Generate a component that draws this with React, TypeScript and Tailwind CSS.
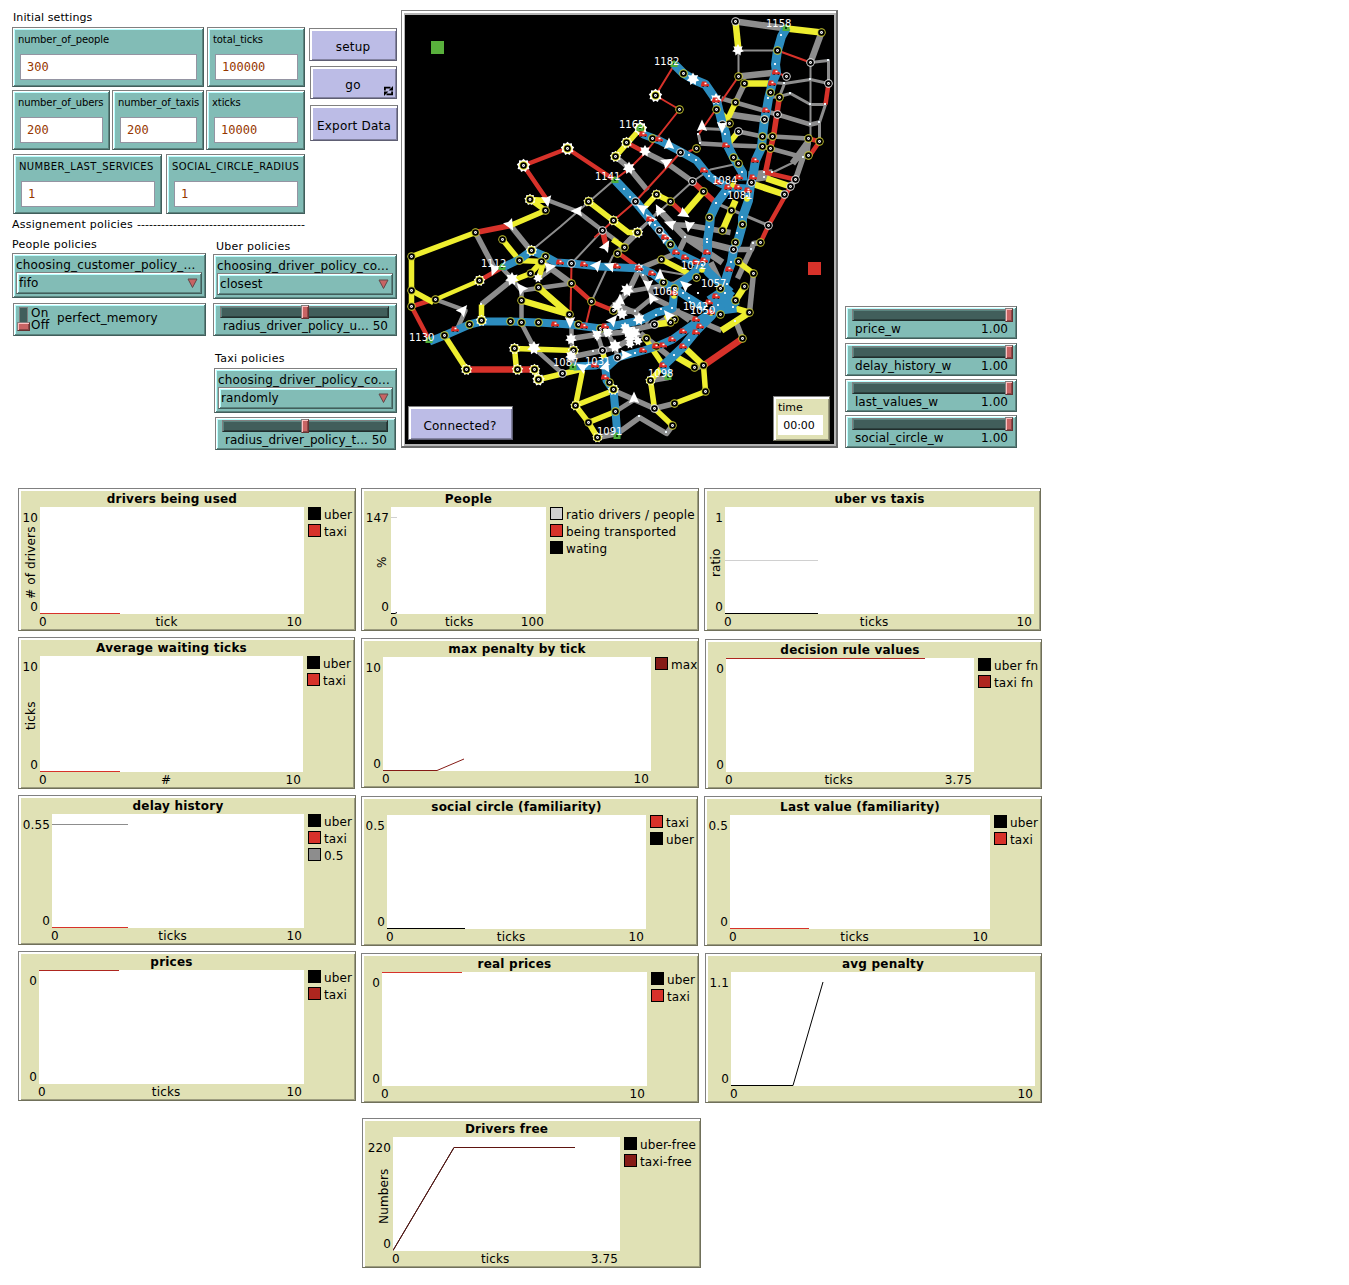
import React from "react";

type Pt = [number, number];
type Edge = [string, number, number[]];

const BLUE = "#2d8dbf";
const YEL = "#eeee2f";
const RED = "#d7322a";
const GRAY = "#8d8d8d";

const EDGES: Edge[] = [
  // thin roads
  [GRAY, 2, [613, 180, 560, 226, 531, 250]],
  [GRAY, 2, [738, 50, 777, 50]],
  [GRAY, 2, [738, 50, 738, 76]],
  [GRAY, 2, [810, 62, 810, 137, 808, 155]],
  [GRAY, 2, [692, 181, 670, 201, 628, 238, 612, 256, 591, 301]],
  [GRAY, 2, [692, 181, 710, 169, 738, 163]],
  [GRAY, 2, [571, 263, 602, 230]],
  [GRAY, 2, [659, 270, 700, 277]],
  [GRAY, 2, [753, 172, 772, 172, 803, 157]],
  [GRAY, 3, [810, 62, 828, 60, 828, 83]],
  [GRAY, 3, [825, 104, 819, 122, 819, 141]],
  [GRAY, 3, [772, 82, 784, 83, 810, 79, 828, 83]],
  [GRAY, 3, [770, 97, 779, 96, 790, 93, 810, 104, 825, 104]],
  [GRAY, 3, [784, 83, 779, 96]],
  [GRAY, 4, [721, 98, 735, 102, 777, 114, 810, 124, 819, 122]],
  [GRAY, 3, [702, 128, 723, 129]],
  [GRAY, 4, [738, 131, 762, 136, 772, 136, 808, 138]],
  [GRAY, 4, [700, 143, 735, 145, 762, 146, 770, 148, 803, 157]],
  [GRAY, 3, [698, 134, 700, 143]],
  [GRAY, 6, [729, 114, 764, 119]],
  [GRAY, 5, [744, 83, 735, 102]],
  [GRAY, 6, [735, 21, 786, 28]],
  [GRAY, 6, [821, 32, 810, 62]],
  [GRAY, 6, [738, 76, 776, 72]],
  [GRAY, 6, [792, 163, 808, 141]],
  [GRAY, 5, [808, 141, 795, 179, 790, 186]],
  [GRAY, 6, [748, 174, 772, 172]],
  [GRAY, 6, [755, 178, 770, 176]],
  [GRAY, 3, [716, 203, 768, 225]],
  [GRAY, 4, [548, 200, 577, 211, 602, 230, 617, 241]],
  [GRAY, 5, [475, 232, 495, 270]],
  [GRAY, 4, [500, 266, 512, 279, 521, 290, 521, 323, 534, 348, 562, 373]],
  [GRAY, 5, [510, 225, 531, 251]],
  [GRAY, 5, [481, 304, 512, 279]],
  [GRAY, 4, [435, 299, 465, 310, 456, 330]],
  [GRAY, 6, [541, 261, 571, 283]],
  [GRAY, 4, [521, 290, 571, 283]],
  [GRAY, 4, [538, 278, 552, 268]],
  [GRAY, 5, [615, 156, 629, 168, 647, 190]],
  [GRAY, 5, [645, 152, 667, 163, 692, 181]],
  [GRAY, 5, [637, 232, 617, 252]],
  [GRAY, 3, [637, 232, 659, 210]],
  [GRAY, 6, [659, 210, 685, 237, 733, 249]],
  [GRAY, 6, [685, 237, 722, 262]],
  [GRAY, 5, [669, 224, 689, 225, 730, 232]],
  [GRAY, 5, [685, 237, 678, 252, 661, 259, 639, 268]],
  [GRAY, 5, [733, 249, 751, 249, 753, 243, 760, 242]],
  [GRAY, 5, [750, 250, 737, 278]],
  [GRAY, 6, [710, 262, 728, 300]],
  [GRAY, 5, [639, 268, 628, 291, 609, 310]],
  [GRAY, 4, [628, 291, 674, 283, 696, 270]],
  [GRAY, 5, [639, 268, 648, 285, 652, 297]],
  [GRAY, 4, [652, 297, 635, 311]],
  [GRAY, 5, [609, 310, 635, 311]],
  [GRAY, 5, [652, 297, 668, 305, 689, 320]],
  [GRAY, 5, [618, 305, 634, 312, 648, 322]],
  [GRAY, 5, [571, 338, 597, 334, 620, 332, 656, 324, 680, 310]],
  [GRAY, 5, [573, 356, 602, 350, 615, 347, 640, 333]],
  [GRAY, 4, [571, 324, 571, 338, 573, 366]],
  [GRAY, 4, [597, 334, 602, 350]],
  [GRAY, 4, [606, 330, 615, 347, 617, 357]],
  [GRAY, 5, [640, 333, 664, 352, 674, 360]],
  [GRAY, 5, [674, 310, 721, 330]],
  [GRAY, 5, [753, 273, 749, 312]],
  [GRAY, 5, [735, 320, 742, 338]],
  [GRAY, 5, [674, 403, 654, 408, 613, 390]],
  [GRAY, 5, [672, 425, 666, 433, 639, 417, 617, 433, 597, 437]],
  [GRAY, 4, [615, 411, 634, 399]],
  [GRAY, 5, [650, 380, 668, 377]],
  [GRAY, 5, [696, 367, 703, 365]],
  // red roads
  [RED, 2, [777, 50, 810, 62]],
  [RED, 2, [776, 72, 786, 76]],
  [RED, 2, [738, 76, 698, 134]],
  [RED, 2, [674, 64, 655, 95, 679, 109, 645, 152, 629, 168, 613, 180]],
  [RED, 2, [680, 152, 635, 201, 613, 220, 594, 237]],
  [RED, 2, [571, 263, 570, 314]],
  [RED, 2, [591, 301, 585, 326]],
  [RED, 2, [696, 148, 688, 151]],
  [RED, 4, [828, 83, 825, 104]],
  [RED, 4, [819, 141, 808, 157]],
  [RED, 5, [779, 96, 773, 136, 770, 148, 765, 172]],
  [RED, 4, [765, 172, 795, 179]],
  [RED, 4, [790, 186, 768, 225, 760, 242]],
  [RED, 4, [547, 200, 523, 165, 567, 148, 615, 180]],
  [RED, 4, [626, 142, 645, 152]],
  [RED, 5, [692, 181, 716, 203]],
  [RED, 5, [475, 232, 510, 225]],
  [RED, 4, [411, 306, 433, 299]],
  [RED, 4, [411, 306, 429, 340]],
  [RED, 4, [479, 280, 500, 268]],
  [RED, 6, [466, 369, 534, 369]],
  [RED, 4, [571, 283, 591, 301, 613, 310]],
  [RED, 5, [602, 230, 606, 247]],
  [RED, 4, [617, 252, 639, 268]],
  [RED, 4, [670, 201, 684, 214]],
  [RED, 6, [742, 338, 703, 365]],
  [RED, 6, [724, 295, 735, 300]],
  [RED, 4, [808, 138, 819, 141]],
  // yellow roads
  [YEL, 6, [786, 28, 821, 32]],
  [YEL, 6, [735, 21, 738, 50]],
  [YEL, 6, [744, 83, 772, 83]],
  [YEL, 5, [735, 102, 728, 117]],
  [YEL, 5, [738, 131, 729, 142]],
  [YEL, 5, [717, 109, 728, 120]],
  [YEL, 5, [640, 128, 615, 156]],
  [YEL, 6, [754, 184, 784, 194]],
  [YEL, 6, [766, 178, 790, 186]],
  [YEL, 6, [735, 200, 722, 230]],
  [YEL, 6, [703, 191, 684, 213]],
  [YEL, 5, [643, 208, 656, 194, 670, 201]],
  [YEL, 5, [588, 201, 628, 232, 637, 232]],
  [YEL, 5, [612, 239, 624, 247]],
  [YEL, 5, [475, 232, 411, 256, 411, 306]],
  [YEL, 5, [510, 225, 545, 210, 530, 199, 548, 200]],
  [YEL, 5, [411, 290, 433, 302]],
  [YEL, 4, [435, 299, 479, 280]],
  [YEL, 5, [481, 304, 481, 321]],
  [YEL, 5, [502, 239, 519, 260]],
  [YEL, 5, [519, 260, 541, 261, 530, 273, 512, 280]],
  [YEL, 5, [545, 256, 538, 278]],
  [YEL, 6, [538, 287, 569, 314, 521, 300]],
  [YEL, 5, [444, 335, 466, 369]],
  [YEL, 5, [534, 369, 538, 379, 580, 369]],
  [YEL, 5, [516, 369, 514, 348, 573, 350]],
  [YEL, 5, [582, 370, 575, 405, 588, 422, 597, 437]],
  [YEL, 5, [575, 405, 613, 390]],
  [YEL, 5, [588, 422, 615, 411]],
  [YEL, 5, [602, 350, 606, 368]],
  [YEL, 5, [661, 259, 696, 277]],
  [YEL, 5, [737, 261, 753, 273]],
  [YEL, 6, [744, 286, 735, 300]],
  [YEL, 6, [735, 308, 749, 312, 721, 330]],
  [YEL, 5, [703, 365, 705, 391, 674, 403]],
  [YEL, 5, [654, 408, 672, 425]],
  [YEL, 5, [663, 365, 650, 380, 654, 408]],
  [YEL, 5, [644, 337, 663, 365]],
  [YEL, 6, [684, 347, 703, 365]],
  [YEL, 6, [675, 356, 694, 367]],
  [YEL, 6, [654, 324, 670, 322, 666, 314]],
  // main lines
  [BLUE, 9, [786, 27, 781, 36, 777, 50, 775, 64, 776, 72, 772, 82, 768, 98, 766, 110, 764, 119, 762, 136, 761, 147, 755, 160, 753, 172, 750, 184, 748, 200, 742, 217, 742, 224, 737, 242, 733, 249, 731, 262, 728, 270, 722, 290]],
  [BLUE, 9, [674, 64, 683, 73, 693, 79, 705, 84, 716, 100, 722, 124, 725, 132, 727, 145, 733, 157, 742, 172, 742, 180]],
  [BLUE, 8, [640, 128, 643, 134, 659, 140, 680, 151, 696, 160, 704, 170, 709, 176, 718, 182, 728, 187, 748, 188]],
  [BLUE, 9, [728, 187, 716, 203, 710, 216, 709, 227, 707, 240, 707, 252, 703, 265, 708, 272, 730, 292]],
  [BLUE, 9, [615, 180, 635, 201, 650, 219, 659, 230, 670, 244, 675, 252, 700, 264]],
  [BLUE, 8, [502, 267, 519, 259, 531, 250, 545, 256, 556, 262, 571, 263, 600, 266, 640, 268, 652, 273, 663, 282, 674, 288, 689, 298, 705, 308]],
  [BLUE, 8, [429, 341, 444, 335, 469, 324, 481, 321, 510, 321, 538, 322, 570, 324, 600, 328, 640, 320, 656, 312, 672, 308, 674, 287, 690, 275, 702, 264]],
  [BLUE, 8, [573, 366, 595, 365, 617, 357, 643, 350, 656, 346, 672, 339, 683, 331, 700, 319, 712, 311, 736, 308]],
  [BLUE, 8, [617, 357, 605, 368, 606, 380, 613, 390, 615, 411, 617, 435]],
  [BLUE, 9, [668, 375, 663, 365, 683, 346, 696, 330, 711, 315, 731, 290]],
  [BLUE, 14, [710, 302, 722, 294, 734, 308]],
];

const YELLOW_NODES: Pt[] = [
  [821, 32], [738, 76], [777, 50], [744, 83], [770, 92], [779, 97], [735, 102], [729, 123], [764, 119], [762, 136], [772, 136], [762, 146], [770, 148], [808, 138], [819, 141], [808, 155],
  [683, 73], [716, 109], [679, 109], [696, 148], [652, 138], [733, 157], [738, 163], [703, 191], [731, 210], [722, 230], [709, 217], [742, 224], [735, 242], [760, 242], [670, 201], [670, 244],
  [545, 210], [475, 232], [411, 256], [411, 290], [411, 306], [435, 299], [444, 335], [469, 324], [502, 239], [519, 260], [545, 256], [541, 261], [530, 273], [538, 287], [521, 300], [510, 321], [521, 322], [538, 322], [571, 283], [591, 301], [569, 314], [578, 324], [600, 328], [613, 310], [617, 253], [624, 247], [661, 259], [663, 282], [674, 288], [696, 277], [738, 261], [753, 273], [744, 286], [735, 300], [749, 312], [742, 338], [720, 314], [720, 288], [703, 365], [705, 391], [694, 367], [674, 403], [672, 425], [646, 338], [656, 346], [615, 411], [609, 382], [588, 422], [573, 350], [674, 319], [670, 322],
];
const WHITE_NODES: Pt[] = [
  [735, 21], [810, 62], [828, 83], [786, 76], [777, 114], [764, 119], [722, 124], [738, 131], [680, 152], [692, 181], [795, 179], [790, 186], [784, 194], [768, 225], [751, 182], [733, 249], [635, 201], [659, 230], [602, 230], [571, 263], [562, 373], [602, 350], [617, 357], [654, 408], [654, 324],
];
const BURST_NODES: [number, number, number][] = [
  [655, 95, 6.5], [567, 148, 6.5], [523, 165, 6.5], [529.5, 199, 5.5], [588, 201, 5], [615, 156, 5.5], [626, 142, 5.5], [640, 128, 6.5], [656, 194, 5], [613, 220, 5], [637, 232, 5.5], [479, 280, 5.5], [531, 250, 5.5], [481, 320, 5.5], [466, 369, 5.5], [514, 348, 5.5], [517, 369, 5.5], [534, 369, 5.5], [538, 379, 6], [573, 350, 5.5], [575, 405, 5], [597, 437, 5], [650, 380, 5], [613, 389, 5.5],
];
const STARS: [number, number, number][] = [
  [738, 50, 6], [693, 79, 6.5], [716, 99, 6], [645, 151, 6], [629, 168, 6.5], [512, 279, 7], [534, 348, 7], [538, 278, 5], [571, 339, 6], [571, 356, 6], [627, 290, 7], [617, 306, 6], [622, 314, 6], [639, 319, 6.5], [615, 346, 7], [628, 331, 7], [634, 333, 7], [630, 338, 6], [638, 341, 5], [625, 327, 5], [597, 335, 5], [639, 268, 5], [608, 333, 5], [659, 211, 4], [630, 344, 5],
];
const ARROWS: [number, number, number][] = [
  [702, 126, 0], [722, 127, 180], [669, 144, 0], [667, 162, 60], [547, 201, 170], [577, 211, 270], [510, 225, 150], [494, 270, 200], [521, 288, 320], [463, 310, 40], [550, 267, 80], [597, 265, 40], [610, 266, 290], [659, 210, 330], [642, 208, 300], [670, 224, 290], [684, 214, 120], [689, 226, 190], [606, 246, 30], [648, 285, 180], [652, 298, 330], [685, 285, 310], [660, 275, 0], [570, 322, 180], [582, 367, 300], [597, 335, 180], [613, 320, 40], [606, 330, 320], [626, 355, 90], [634, 398, 0], [668, 315, 320], [620, 300, 0], [606, 366, 20], [650, 219, 320], [665, 237, 330],
];
const CARS: Pt[] = [
  [776, 72], [772, 83], [766, 110], [716, 100], [705, 84], [726, 145], [643, 134], [659, 139], [755, 160], [704, 170], [753, 177], [739, 177], [728, 187], [738, 187], [748, 190], [718, 182], [650, 219], [665, 237], [676, 252], [685, 257], [696, 262], [707, 252], [704, 260], [729, 269], [560, 262], [584, 264], [617, 266], [639, 268], [652, 273], [674, 293], [455, 329], [555, 324], [584, 326], [605, 326], [595, 365], [605, 377], [643, 350], [656, 346], [663, 345], [672, 339], [683, 331], [696, 332], [683, 346], [700, 326], [696, 319], [709, 302], [716, 296], [663, 365], [711, 312],
];
const DOTS: Pt[] = [
  [781, 35], [775, 64], [768, 98], [725, 134], [689, 155], [696, 160], [709, 176], [742, 172], [747, 196], [742, 217], [737, 233], [709, 227], [707, 239], [707, 242], [716, 203], [725, 194], [731, 262], [624, 189], [630, 197], [655, 225], [643, 275], [656, 315], [661, 309], [672, 308], [635, 353], [674, 355], [689, 340], [702, 265], [683, 293], [689, 298], [725, 293], [718, 305], [733, 307], [727, 284], [690, 302], [828, 60], [810, 79], [810, 104], [825, 104], [819, 122], [810, 124], [784, 83], [790, 93], [751, 249], [753, 243], [685, 237], [735, 321], [666, 432], [639, 416], [481, 304], [764, 172], [764, 177], [772, 172], [803, 157], [698, 134], [700, 143], [635, 311], [698, 293], [593, 351],
];
const TERMINALS: Pt[] = [
  [786, 28], [674, 64], [640, 128], [615, 180], [502, 267], [429, 340], [573, 367], [617, 436], [668, 377],
];
const LABELS: [number, number, string][] = [
  [766, 27, "1158"], [654, 65, "1182"], [619, 128, "1165"], [595, 180, "1141"], [712, 184, "1084"], [727, 199, "1081"], [481, 267, "1112"], [681, 269, "1072"], [653, 295, "1068"], [701, 287, "1057"], [683, 310, "1042"], [690, 314, "1050"], [409, 341, "1130"], [553, 366, "1087"], [585, 365, "1031"], [648, 377, "1098"], [597, 435, "1091"],
];

function starPoints(x: number, y: number, r: number, n: number, inner: number) {
  const out: string[] = [];
  for (let i = 0; i < n * 2; i++) {
    const a = (Math.PI * i) / n - Math.PI / 2;
    const q = i % 2 ? r * inner : r;
    out.push((x + q * Math.cos(a)).toFixed(1) + "," + (y + q * Math.sin(a)).toFixed(1));
  }
  return out.join(" ");
}

function Stop({ x, y, halo }: { x: number; y: number; halo: string }) {
  return (
    <g>
      <circle cx={x + 0.5} cy={y + 0.5} r={4.2} fill={halo} />
      <circle cx={x + 0.5} cy={y + 0.5} r={3.3} fill="#000" />
      <circle cx={x + 0.5} cy={y + 0.5} r={1.4} fill="#fff" />
      <circle cx={x + 0.5} cy={y + 0.5} r={0.5} fill="#555" />
    </g>
  );
}

function CityMap() {
  return (
    <svg className="block h-[429px] w-[429px] bg-black" viewBox="405 15 429 429">
      <rect x={431} y={41} width={13} height={13} fill="#59b03c" />
      <rect x={808} y={262} width={13} height={13} fill={RED} />
      <g transform="translate(0.5 0.5)">
        {EDGES.map(([c, w, p], i) => (
          <polyline key={i} points={p.join(" ")} fill="none" stroke={c} strokeWidth={w > 3 && w < 8 ? w + 0.5 : w} strokeLinejoin="round" />
        ))}
      </g>
      {[[747, 199], [702, 270], [674, 296], [721, 288], [711, 313], [733, 185]].map(([x, y]) => (
        <circle key={x} cx={x} cy={y} r={2.8} fill={YEL} />
      ))}
      {BURST_NODES.map(([x, y, r], i) => (
        <g key={i}>
          <polygon points={starPoints(x + 0.5, y + 0.5, r + 0.3, 9, 0.78)} fill="#fff" />
          <Stop x={x} y={y} halo={YEL} />
        </g>
      ))}
      {YELLOW_NODES.map(([x, y], i) => <Stop key={i} x={x} y={y} halo="#c9c92e" />)}
      {WHITE_NODES.map(([x, y], i) => <Stop key={i} x={x} y={y} halo="#e4e4e4" />)}
      {STARS.map(([x, y, r], i) => <polygon key={i} points={starPoints(x, y, r, 7, 0.6)} fill="#fff" />)}
      {ARROWS.map(([x, y, a], i) => (
        <path key={i} d="M0 -6.5 L5.2 5 L0 3.6 L-5.2 5 Z" fill="#fff" transform={`translate(${x} ${y}) rotate(${a})`} />
      ))}
      {DOTS.map(([x, y], i) => <rect key={i} x={x - 1} y={y - 1} width={2} height={2} fill="#e8f2f8" />)}
      {CARS.map(([x, y], i) => (
        <g key={i} transform={`translate(${x} ${y})`}>
          <path d="M-4 1 L-3 -2.4 H1 L2 -0.4 L4 0.6 V2.6 H-4 Z" fill="#dc2a22" />
          <rect x={-0.5} y={-1.3} width={2} height={1.6} fill="#fff" />
          <rect x={-2.6} y={2} width={1.4} height={1} fill="#222" />
          <rect x={1.6} y={2} width={1.4} height={1} fill="#222" />
        </g>
      ))}
      {TERMINALS.map(([x, y], i) => (
        <g key={i}>
          <path d={`M${x - 3.5} ${y + 3} V${y - 1} L${x} ${y - 4} L${x + 3.5} ${y - 1} V${y + 3} Z`} fill="#4fae3a" />
          <rect x={x - 1} y={y - 1} width={2} height={2} fill="#123d0c" />
        </g>
      ))}
      <g fill="#fff" fontFamily="DejaVu Sans" fontSize={10}>
        {LABELS.map(([x, y, t]) => <text key={t} x={x} y={y}>{t}</text>)}
      </g>
    </svg>
  );
}

const TEAL =
  "bg-[#82bcb6] border border-t-[#808080] border-l-[#808080] border-b-[#415e5b] border-r-[#415e5b] shadow-[inset_1px_1px_#fff,inset_-1px_-1px_#5b847f,inset_2px_2px_#b9ffff]";
const LILAC =
  "flex items-center justify-center bg-[#bcbce6] border border-t-[#808080] border-l-[#808080] border-b-[#5e5e73] border-r-[#5e5e73] shadow-[inset_2px_2px_#fff,inset_-1px_-1px_#8383a1] text-[12px] tracking-[0.2px]";
const TAN =
  "bg-[#e0e1b5] border border-t-[#808080] border-l-[#808080] border-b-[#70705a] border-r-[#70705a] shadow-[inset_2px_2px_#fff,inset_-1px_-1px_#9d9d7f]";
const THUMB =
  "bg-[#c86464] border border-t-[#808080] border-l-[#808080] border-b-[#643232] border-r-[#643232] shadow-[inset_1px_1px_#ffc0c0,inset_-1px_-1px_#8c4646]";

function Input({ label, value, size }: { label: string; value: string; size: string }) {
  return (
    <div className={`${TEAL} ${size} h-[60px] shrink-0 pl-[7px] pr-[6px]`}>
      <div className="-ml-[2px] h-[26px] whitespace-nowrap pt-[5px] text-[10px] leading-[14px]">{label}</div>
      <div className="flex h-[26px] items-center border border-[#9494a2] bg-white pl-[6px] font-['DejaVu_Sans_Mono',monospace] text-[12px] tracking-normal text-[#963700]">
        {value}
      </div>
    </div>
  );
}

function Chooser({ label, value, size }: { label: string; value: string; size: string }) {
  return (
    <div className={`${TEAL} ${size} h-[45px] px-[3px]`}>
      <div className="h-[18px] overflow-visible whitespace-nowrap pt-[3px] text-[12px] leading-[16px] tracking-[0.16px]">{label}</div>
      <div className={`${TEAL} flex h-[22px] items-center justify-between pl-[2px] pr-[3px] text-[12px] tracking-[0.1px]`}>
        <span className="-mt-[1px]">{value}</span>
        <svg className="h-[11px] w-[11px]" viewBox="0 0 11 11">
          <path d="M1 1 H10 L5.5 9.5 Z" fill="#c86464" stroke="#5f4a4a" />
        </svg>
      </div>
    </div>
  );
}

function Slider({ label, value, size, end }: { label: string; value: string; size: string; end?: boolean }) {
  return (
    <div className={`${TEAL} ${size} h-[33px] pt-[1px]`}>
      <div className={`flex h-[14px] items-center pl-[6px] ${end ? "pr-[3px]" : "pr-[7px]"}`}>
        <div className={`flex h-[12px] grow items-center border border-t-[#808080] border-l-[#808080] border-b-[#212e2d] border-r-[#212e2d] bg-[#415e5b] shadow-[inset_1px_1px_#5b847f,inset_-1px_-1px_#2d413f] ${end ? "justify-end" : "justify-center"}`}>
          <div className={`${THUMB} h-[14px] w-[8px] shrink-0 ${end ? "-mr-[1px]" : ""}`} />
        </div>
      </div>
      <div className="-mt-[1px] flex justify-between whitespace-nowrap pl-[9px] pr-[8px] text-[12px] leading-[16px] tracking-[0.04px]">
        <span>{label}</span>
        <span>{value}</span>
      </div>
    </div>
  );
}

type PlotProps = {
  size: string;
  axis: string;
  canvas: string;
  title: string;
  max: string;
  xmax: string;
  xl?: string;
  yl?: string;
  legend?: [string, string][];
  lines: [string, string][];
};

function Plot({ size, axis, canvas, title, max, xmax, xl, yl, legend, lines }: PlotProps) {
  return (
    <div className={`${TAN} ${size} flex shrink-0 whitespace-nowrap pl-[2px] text-[12px] tracking-[0.15px]`}>
      <div className={`${axis} flex shrink-0 flex-col items-end justify-between pb-[16px] pr-[2px] pt-[22px] leading-[14px]`}>
        <span>{max}</span>
        {yl && <span className="flex h-0 grow rotate-180 justify-center [writing-mode:vertical-rl]">{yl}</span>}
        <span>{"0"}</span>
      </div>
      <div className={`${canvas} flex shrink-0 flex-col`}>
        <div className="flex h-[18px] shrink-0 justify-center pt-[1px] text-[12px] font-bold leading-[18px] tracking-[0.22px]">{title}</div>
        <svg className="block h-0 w-full grow bg-white">
          {lines.map(([c, p], i) => <polyline key={i} points={p} fill="none" stroke={c} />)}
        </svg>
        <div className="-ml-[1px] flex h-[16px] shrink-0 justify-between pr-[2px] leading-[17px]">
          <span>0</span>
          <span>{xl}</span>
          <span>{xmax}</span>
        </div>
      </div>
      {legend && (
        <div className="ml-[4px] mt-[18px] flex flex-col gap-[4px]">
          {legend.map(([c, t]) => (
            <div key={t} className="flex h-[13px] items-center gap-[3px]">
              <svg className="h-[13px] w-[13px] shrink-0"><rect x="0.5" y="0.5" width="12" height="12" fill={c} stroke="#000" /></svg>
              <span className="pt-[2px]">{t}</span>
            </div>
          ))}
        </div>
      )}
    </div>
  );
}

const K = "#000000";
const R = "#d7322a";
const DR = "#ae261f";
const MAROON = "#851b16";

export default function App() {
  return (
    <div className="h-[1285px] w-[1349px] overflow-hidden bg-white font-['DejaVu_Sans',sans-serif] text-black">
      <div className="flex h-[488px] items-start">
        <div className="w-[401px] shrink-0 pt-[11px]">
          <div className="h-[16px] pl-[13px] text-[11px] leading-[14px] tracking-[0.1px]">Initial settings</div>
          <div className="flex h-[191px] pl-[12px]">
            <div className="w-[297px] shrink-0">
              <div className="flex gap-[3px] tracking-[-0.1px]">
                <Input size="w-[192px]" label="number_of_people" value="300" />
                <Input size="w-[98px]" label="total_ticks" value="100000" />
              </div>
              <div className="mt-[3px] flex gap-[2px] tracking-[-0.1px]">
                <Input size="w-[98px]" label="number_of_ubers" value="200" />
                <Input size="w-[92px]" label="number_of_taxis" value="200" />
                <Input size="w-[99px]" label="xticks" value="10000" />
              </div>
              <div className="ml-[1px] mt-[4px] flex gap-[4px] tracking-[0.38px]">
                <Input size="w-[149px]" label="NUMBER_LAST_SERVICES" value="1" />
                <Input size="w-[139px]" label="SOCIAL_CIRCLE_RADIUS" value="1" />
              </div>
            </div>
            <div className="pt-[1px]">
              <div className={`${LILAC} h-[33px] w-[88px] pt-[5px]`}>setup</div>
              <div className={`${LILAC} relative ml-[1px] mt-[5px] h-[33px] w-[87px] pr-[1px] pt-[5px]`}>
                go
                <svg className="absolute bottom-[2px] right-[3px] h-[10px] w-[9px]" viewBox="0 0 9 10" fill="none" stroke="#000" strokeWidth="1.8">
                  <path d="M0.9 4.5 V1.6 H6.5 M8.1 5.5 V8.4 H2.5" />
                  <path d="M9 0 V4.4 H4.6 Z M0 10 V5.6 H4.4 Z" fill="#000" stroke="none" />
                </svg>
              </div>
              <div className={`${LILAC} ml-[1px] mt-[6px] h-[36px] w-[88px] pt-[5px]`}>Export Data</div>
            </div>
          </div>
          <div className="flex h-[20px] gap-[4px] whitespace-nowrap pl-[12px] text-[11px] leading-[14px]">
            <span className="tracking-[0.23px]">Assignement policies</span>
            <span className="tracking-[0.03px]">------------------------------------------</span>
          </div>
          <div className="flex pl-[12px] text-[11px] leading-[14px]">
            <div className="w-[201px]">
              <div className="h-[15px] tracking-[0.24px]">People policies</div>
              <Chooser size="w-[194px]" label="choosing_customer_policy_..." value="fifo" />
              <div className={`${TEAL} ml-[1px] mt-[5px] flex h-[33px] w-[193px] pl-[3px] pt-[3px] text-[12px]`}>
                <div className="flex w-[13px] flex-col items-center">
                  <div className="h-[15px] w-[9px] shrink-0 border border-b-0 border-[#808080] bg-[#415e5b]" />
                  <div className={`${THUMB} h-[9px] w-[13px] shrink-0`} />
                </div>
                <div className="ml-[1px] w-[26px] leading-[12px] tracking-[0.2px]"><div>On</div><div>Off</div></div>
                <div className="pt-[4px] tracking-[0.12px]">perfect_memory</div>
              </div>
            </div>
            <div className="pt-[2px]">
              <div className="h-[14px] pl-[3px] tracking-[0.24px]">Uber policies</div>
              <Chooser size="w-[184px]" label="choosing_driver_policy_co..." value="closest" />
              <div className="mt-[4px]"><Slider size="w-[184px]" label="radius_driver_policy_u..." value="50" /></div>
              <div className="mt-[16px] h-[16px] pl-[2px] tracking-[0.28px]">Taxi policies</div>
              <div className="ml-[1px]"><Chooser size="w-[183px]" label="choosing_driver_policy_co..." value="randomly" /></div>
              <div className="ml-[2px] mt-[4px]"><Slider size="w-[181px]" label="radius_driver_policy_t..." value="50" /></div>
            </div>
          </div>
        </div>

        <div className="relative mt-[10px] h-[438px] w-[437px] shrink-0 border border-b-2 border-r-2 border-b-[#6b6b6b] border-l-[#808080] border-r-[#6b6b6b] border-t-[#808080] bg-[#b4b4b4] pl-[3px] pt-[4px] shadow-[inset_2px_2px_#fff]">
          <CityMap />
          <div className={`${LILAC} absolute left-[6px] top-[395px] h-[34px] w-[105px] pr-[1px] pt-[5px]`}>Connected?</div>
          <div className={`${TAN} absolute left-[371px] top-[385px] h-[45px] w-[57px] px-[4px] pt-[4px]`}>
            <div className="h-[14px] text-[11px] leading-[13px]">time</div>
            <div className="h-[20px] w-[45px] bg-white pr-[3px] text-center text-[11px] leading-[21px]">00:00</div>
          </div>
        </div>

        <div className="ml-[7px] pt-[306px]">
          <Slider end size="w-[172px]" label="price_w" value="1.00" />
          <div className="mt-[4px] flex flex-col gap-[3px]">
            <Slider end size="w-[172px]" label="delay_history_w" value="1.00" />
            <Slider end size="w-[172px]" label="last_values_w" value="1.00" />
            <Slider end size="w-[172px]" label="social_circle_w" value="1.00" />
          </div>
        </div>
      </div>

      <div className="flex h-[149px] items-start pl-[18px]">
        <Plot size="w-[338px] h-[143px]" axis="w-[19px]" canvas="w-[264px]" title="drivers being used" max="10" xmax="10" xl="tick" yl="# of drivers"
          legend={[[K, "uber"], [R, "taxi"]]} lines={[[R, "0,106.5 80,106.5"]]} />
        <Plot size="ml-[5px] w-[338px] h-[143px]" axis="w-[27px]" canvas="w-[155px]" title="People" max="147" xmax="100" xl="ticks" yl="%"
          legend={[["#d0d0d0", "ratio drivers / people"], [R, "being transported"], [K, "wating"]]} lines={[["#d0d0d0", "0,10.5 6,10.5"], [K, "0,106.5 4,106.5 6,105.5"]]} />
        <Plot size="ml-[5px] w-[337px] h-[143px]" axis="w-[18px]" canvas="w-[309px]" title="uber vs taxis" max="1" xmax="10" xl="ticks" yl="ratio"
          lines={[["#d0d0d0", "0,53.5 93,53.5"], [K, "0,106.5 93,106.5"]]} />
      </div>
      <div className="flex h-[158px] items-start pl-[18px]">
        <Plot size="w-[337px] h-[152px]" axis="w-[19px]" canvas="w-[263px]" title="Average waiting ticks" max="10" xmax="10" xl="#" yl="ticks"
          legend={[[K, "uber"], [R, "taxi"]]} lines={[[R, "0,115.5 80,115.5"]]} />
        <Plot size="ml-[6px] mt-[1px] w-[338px] h-[150px]" axis="w-[19px]" canvas="w-[268px]" title="max penalty by tick" max="10" xmax="10"
          legend={[[MAROON, "max"]]} lines={[[MAROON, "0,113.5 54,113.5 81,102"]]} />
        <Plot size="ml-[6px] mt-[2px] w-[337px] h-[150px]" axis="w-[18px]" canvas="w-[248px]" title="decision rule values" max="0" xmax="3.75" xl="ticks"
          legend={[[K, "uber fn"], [DR, "taxi fn"]]} lines={[[DR, "0,0.5 199,0.5"]]} />
      </div>
      <div className="flex h-[156px] items-start pl-[18px]">
        <Plot size="w-[338px] h-[150px]" axis="w-[31px]" canvas="w-[252px]" title="delay history" max="0.55" xmax="10" xl="ticks"
          legend={[[K, "uber"], [R, "taxi"], ["#8d8d8d", "0.5"]]} lines={[["#8d8d8d", "0,10.5 76,10.5"], [R, "0,113.5 76,113.5"]]} />
        <Plot size="ml-[5px] mt-[1px] w-[337px] h-[150px]" axis="w-[23px]" canvas="w-[259px]" title="social circle (familiarity)" max="0.5" xmax="10" xl="ticks"
          legend={[[R, "taxi"], [K, "uber"]]} lines={[[K, "0,113.5 78,113.5"]]} />
        <Plot size="ml-[6px] mt-[1px] w-[338px] h-[150px]" axis="w-[23px]" canvas="w-[260px]" title="Last value (familiarity)" max="0.5" xmax="10" xl="ticks"
          legend={[[K, "uber"], [R, "taxi"]]} lines={[[R, "0,113.5 79,113.5"]]} />
      </div>
      <div className="flex h-[167px] items-start pl-[18px]">
        <Plot size="w-[338px] h-[150px]" axis="w-[18px]" canvas="w-[265px]" title="prices" max="0" xmax="10" xl="ticks"
          legend={[[K, "uber"], [DR, "taxi"]]} lines={[[DR, "0,0.5 80,0.5"]]} />
        <Plot size="ml-[5px] mt-[2px] w-[338px] h-[150px]" axis="w-[18px]" canvas="w-[265px]" title="real prices" max="0" xmax="10"
          legend={[[K, "uber"], [R, "taxi"]]} lines={[[R, "0,0.5 80,0.5"]]} />
        <Plot size="ml-[6px] mt-[2px] w-[337px] h-[150px]" axis="w-[23px]" canvas="w-[304px]" title="avg penalty" max="1.1" xmax="10"
          lines={[[K, "0,113.5 62,113.5 92,10"]]} />
      </div>
      <div className="flex items-start pl-[362px]">
        <Plot size="w-[339px] h-[150px]" axis="w-[28px]" canvas="w-[227px]" title="Drivers free" max="220" xmax="3.75" xl="ticks" yl="Numbers"
          legend={[[K, "uber-free"], [MAROON, "taxi-free"]]} lines={[[K, "0,113.5 61,10.5 182,10.5"], ["#5e1410", "0,113.5 61,10.5 182,10.5"]]} />
      </div>
    </div>
  );
}
